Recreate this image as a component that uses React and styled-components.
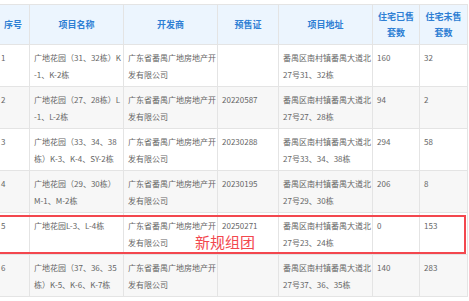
import React from "react";
import styled, { createGlobalStyle } from "styled-components";

const Global = createGlobalStyle`
  html, body { margin: 0; padding: 0; background: #fff; overflow: hidden; }
  body { font-family: "Noto Sans CJK SC", "Noto Sans", sans-serif; }
`;

const Page = styled.div`
  position: relative;
  width: 469px;
  height: 301px;
  padding-top: 4px;
  box-sizing: border-box;
  overflow: hidden;
`;

const Table = styled.table`
  margin-left: -4px;
  width: 471px;
  table-layout: fixed;
  border-collapse: collapse;
  border: 1px solid #e4e4e4;
`;

const Th = styled.th`
  background: #ecf5fe;
  color: #2f7fd4;
  font-size: 9px;
  font-weight: 700;
  line-height: 16px;
  height: 40px;
  padding: 0 4px;
  border: 1px solid #e4e4e4;
  text-align: center;
  vertical-align: middle;
  box-sizing: border-box;
`;

const Tr = styled.tr`
  background: ${(p) => (p.$alt ? "#f7f7f7" : "#fff")};
`;

const Td = styled.td`
  color: #666;
  font-size: 8px;
  line-height: 17px;
  height: 41px;
  padding: 4px 1px 3px 4px;
  border: 1px solid #e4e4e4;
  vertical-align: top;
  text-align: left;
  box-sizing: border-box;
  word-break: break-all;
  line-break: anywhere;
`;

const Mark = styled.div`
  position: absolute;
  top: 215px;
  left: -6px;
  width: 472px;
  height: 39px;
  border: 2.5px solid #f3474e;
  box-sizing: border-box;
  pointer-events: none;
`;

const MarkText = styled.span`
  position: absolute;
  left: 199px;
  top: 16px;
  font-size: 15px;
  line-height: 18px;
  color: #f3474e;
  white-space: nowrap;
`;

const cols = [33, 94, 94, 61, 94, 47, 48];
const dev = "广东省番禺广地房地产开发有限公司";
const rows = [
  ["1", "广地花园（31、32栋）K-1、K-2栋", dev, "", "番禺区南村镇番禺大道北27号31、32栋", "160", "32"],
  ["2", "广地花园（27、28栋）L-1、L-2栋", dev, "20220587", "番禺区南村镇番禺大道北27号27、28栋", "94", "2"],
  ["3", "广地花园（33、34、38栋）K-3、K-4、SY-2栋", dev, "20230288", "番禺区南村镇番禺大道北27号33、34、38栋", "294", "58"],
  ["4", "广地花园（29、30栋）M-1、M-2栋", dev, "20230195", "番禺区南村镇番禺大道北27号29、30栋", "206", "8"],
  ["5", "广地花园L-3、L-4栋", dev, "20250271", "番禺区南村镇番禺大道北27号23、24栋", "0", "153"],
  ["6", "广地花园（37、36、35栋）K-5、K-6、K-7栋", dev, "", "番禺区南村镇番禺大道北27号37、36、35栋", "140", "283"],
];

export default function App() {
  return (
    <>
      <Global />
      <Page>
        <Table>
          <colgroup>
            {cols.map((w, i) => (
              <col key={i} style={{ width: w }} />
            ))}
          </colgroup>
          <thead>
            <tr>
              <Th>序号</Th>
              <Th>项目名称</Th>
              <Th>开发商</Th>
              <Th>预售证</Th>
              <Th>项目地址</Th>
              <Th>住宅已售<br />套数</Th>
              <Th>住宅未售<br />套数</Th>
            </tr>
          </thead>
          <tbody>
            {rows.map((r, i) => (
              <Tr key={i} $alt={i % 2 === 1}>
                {r.map((c, j) => (
                  <Td key={j}>{c}</Td>
                ))}
              </Tr>
            ))}
          </tbody>
        </Table>
        <Mark>
          <MarkText>新规组团</MarkText>
        </Mark>
      </Page>
    </>
  );
}
